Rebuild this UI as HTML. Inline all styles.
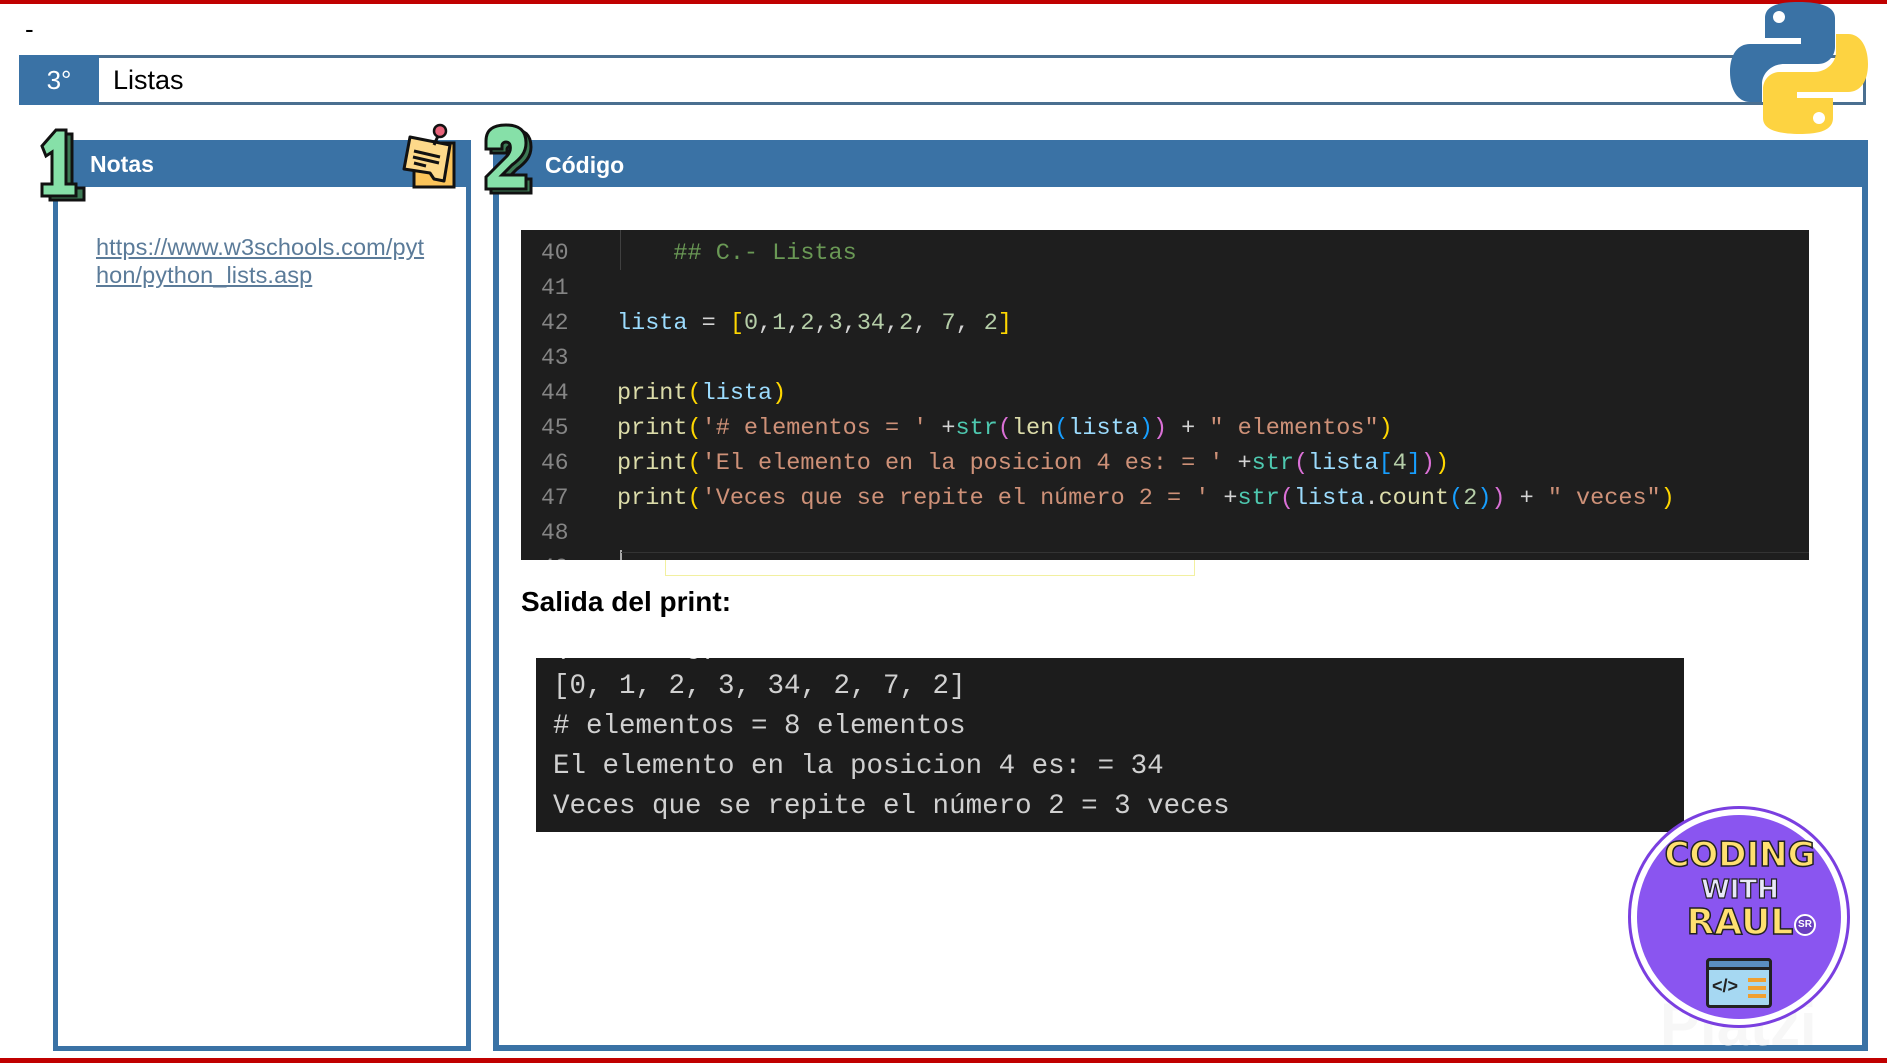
<!DOCTYPE html>
<html><head><meta charset="utf-8"><style>
*{margin:0;padding:0;box-sizing:border-box}
body{width:1887px;height:1063px;background:#fff;position:relative;overflow:hidden;font-family:"Liberation Sans",sans-serif}
.abs{position:absolute}
.blue{background:#3a72a5}
.mono{font-family:"Liberation Mono",monospace}
.code div{height:35px;line-height:35px;white-space:pre}
.ln{color:#858585}
.c{color:#6a9955}.v{color:#9cdcfe}.f{color:#dcdcaa}.s{color:#ce9178}.t{color:#4ec9b0}.n{color:#b5cea8}
.g{color:#ffd700}.p{color:#da70d6}.b{color:#179fff}.w{color:#d4d4d4}
.out div{height:40px;line-height:40px;white-space:pre;color:#d0d0d0}
</style></head><body>
<div class="abs" style="left:0;top:0;width:1887px;height:4px;background:#c00000"></div>
<div class="abs" style="left:0;top:1058px;width:1887px;height:5px;background:#c00000"></div>
<div class="abs" style="left:25px;top:14px;font-size:26px">-</div>

<div class="abs" style="left:19px;top:55px;width:1847px;height:50px;border:3px solid #4a6f90;border-left:none"></div>
<div class="abs blue" style="left:19px;top:55px;width:80px;height:50px;color:#fff;font-size:26px;line-height:50px;text-align:center">3°</div>
<div class="abs" style="left:113px;top:55px;height:50px;line-height:50px;font-size:27px;color:#000">Listas</div>

<svg class="abs" style="left:1728px;top:0" width="142" height="136" viewBox="0 0 142 136">
<path d="M70 2c-20 0-33 4-33 16v20h36v6H22C10 44 2 54 2 72s8 30 20 30h12V84c0-11 10-20 22-20h34c10 0 17-8 17-17V18C107 7 94 2 70 2z" fill="#3a72a5"/>
<circle cx="51" cy="17" r="6" fill="#fff"/>
<path d="M72 134c20 0 33-4 33-16V98H69v-6h51c12 0 20-10 20-28s-8-30-20-30h-12v18c0 11-10 20-22 20H52c-10 0-17 8-17 17v29c0 11 13 16 37 16z" fill="#fdd341"/>
<circle cx="91" cy="118" r="6" fill="#fff"/>
</svg>

<div class="abs" style="left:53px;top:140px;width:418px;height:911px;border:5px solid #3a72a5;border-top:none"></div>
<div class="abs blue" style="left:53px;top:140px;width:418px;height:47px"></div>
<div class="abs" style="left:90px;top:148px;color:#fff;font-weight:bold;font-size:23px;line-height:32px">Notas</div>
<svg class="abs" style="left:36px;top:126px" width="52" height="76" viewBox="0 0 52 76">
<path d="M10 22 L24 6 L32 6 L32 60 L44 60 L44 72 L10 72 L10 60 L20 60 L20 28 L14 32Z" fill="#3d7a55" stroke="#111" stroke-width="3" transform="translate(4,2)"/>
<path d="M6 20 L20 4 L30 4 L30 58 L40 58 L40 70 L6 70 L6 58 L16 58 L16 26 L10 30Z" fill="#86e0a8" stroke="#111" stroke-width="3"/>
</svg>
<svg class="abs" style="left:400px;top:123px" width="60" height="66" viewBox="0 0 60 66">
<rect x="14" y="20" width="40" height="44" fill="#fbc45a" stroke="#111" stroke-width="3"/>
<path d="M10 14 L50 22 L44 58 L34 56 L30 50 L4 46Z" fill="#fdd98a" stroke="#111" stroke-width="3" stroke-linejoin="round"/>
<path d="M14 28l26 6M13 34l26 6M14 40l12 3" stroke="#111" stroke-width="3"/>
<circle cx="40" cy="8" r="6" fill="#e8637a" stroke="#111" stroke-width="2.5"/>
<path d="M38 13 L34 22" stroke="#111" stroke-width="3"/>
</svg>
<div class="abs" style="left:96px;top:233px;font-size:23.5px;line-height:28px;color:#5b7b99;text-decoration:underline;letter-spacing:0.1px">https://www.w3schools.com/pyt<br>hon/python_lists.asp</div>

<div class="abs" style="left:493px;top:140px;width:1375px;height:911px;border:6px solid #3a72a5;border-top:none"></div>
<div class="abs blue" style="left:493px;top:140px;width:1375px;height:47px"></div>
<div class="abs" style="left:545px;top:149px;color:#fff;font-weight:bold;font-size:23px;line-height:32px">Código</div>
<svg class="abs" style="left:482px;top:123px" width="56" height="76" viewBox="0 0 56 76">
<g transform="translate(5,4)"><path d="M4 18 C4 6 12 2 24 2 C38 2 44 8 44 20 C44 30 38 36 30 42 L20 52 L44 52 L44 66 L4 66 L4 54 L24 34 C28 30 29 26 28 22 C27 18 21 18 20 22 L20 26 L4 26Z" fill="#3d7a55" stroke="#111" stroke-width="3"/></g>
<path d="M4 18 C4 6 12 2 24 2 C38 2 44 8 44 20 C44 30 38 36 30 42 L20 52 L44 52 L44 66 L4 66 L4 54 L24 34 C28 30 29 26 28 22 C27 18 21 18 20 22 L20 26 L4 26Z" fill="#86e0a8" stroke="#111" stroke-width="3"/>
</svg>

<div class="abs" style="left:521px;top:230px;width:1288px;height:330px;background:#1e1e1e;overflow:hidden">
<div class="abs" style="left:99px;top:0;width:1px;height:40px;background:#404040"></div>
<div class="abs code mono ln" style="left:20px;top:6px;font-size:23px">
<div>40</div><div>41</div><div>42</div><div>43</div><div>44</div><div>45</div><div>46</div><div>47</div><div>48</div><div>49</div></div>
<div class="abs code mono w" style="left:96px;top:6px;font-size:23.5px">
<div><span class="c">    ## C.- Listas</span></div>
<div> </div>
<div><span class="v">lista</span> = <span class="g">[</span><span class="n">0</span>,<span class="n">1</span>,<span class="n">2</span>,<span class="n">3</span>,<span class="n">34</span>,<span class="n">2</span>, <span class="n">7</span>, <span class="n">2</span><span class="g">]</span></div>
<div> </div>
<div><span class="f">print</span><span class="g">(</span><span class="v">lista</span><span class="g">)</span></div>
<div><span class="f">print</span><span class="g">(</span><span class="s">'# elementos = '</span> +<span class="t">str</span><span class="p">(</span><span class="f">len</span><span class="b">(</span><span class="v">lista</span><span class="b">)</span><span class="p">)</span> + <span class="s">" elementos"</span><span class="g">)</span></div>
<div><span class="f">print</span><span class="g">(</span><span class="s">'El elemento en la posicion 4 es: = '</span> +<span class="t">str</span><span class="p">(</span><span class="v">lista</span><span class="b">[</span><span class="n">4</span><span class="b">]</span><span class="p">)</span><span class="g">)</span></div>
<div><span class="f">print</span><span class="g">(</span><span class="s">'Veces que se repite el número 2 = '</span> +<span class="t">str</span><span class="p">(</span><span class="v">lista</span>.<span class="f">count</span><span class="b">(</span><span class="n">2</span><span class="b">)</span><span class="p">)</span> + <span class="s">" veces"</span><span class="g">)</span></div>
</div>
<div class="abs" style="left:99px;top:320px;width:2px;height:10px;background:#aaa"></div>
<div class="abs" style="left:100px;top:322px;width:1188px;height:1px;background:#333"></div>
</div>
<div class="abs" style="left:665px;top:560px;width:530px;height:16px;border:1px solid #f2f0a0;border-top:none"></div>

<div class="abs" style="left:521px;top:586px;font-size:28px;font-weight:bold;color:#000">Salida del print:</div>

<div class="abs" style="left:536px;top:658px;width:1148px;height:174px;background:#1c1c1c;overflow:hidden">
<div class="abs out mono" style="left:17px;top:-31px;font-size:27.5px">
<div>(  ...  g)</div>
<div>[0, 1, 2, 3, 34, 2, 7, 2]</div>
<div># elementos = 8 elementos</div>
<div>El elemento en la posicion 4 es: = 34</div>
<div>Veces que se repite el número 2 = 3 veces</div>
</div></div>

<div class="abs" style="left:1660px;top:990px;font-size:60px;font-weight:bold;color:#f7f7f7">Platzi</div>

<div class="abs" style="left:1628px;top:806px;width:222px;height:222px;border-radius:50%;background:#fff;border:3px solid #7a3fe0"></div>
<div class="abs" style="left:1637px;top:815px;width:204px;height:204px;border-radius:50%;background:#8a55f0"></div>
<div class="abs" style="left:1660px;top:838px;width:160px;text-align:center;font-family:'DejaVu Sans',sans-serif;font-weight:bold;color:#ffe070;font-size:34px;line-height:34px;-webkit-text-stroke:1.5px #222">CODING</div>
<div class="abs" style="left:1660px;top:876px;width:160px;text-align:center;font-family:'DejaVu Sans',sans-serif;font-weight:bold;color:#e8e8f8;font-size:26px;line-height:28px;-webkit-text-stroke:1.2px #222">WITH</div>
<div class="abs" style="left:1680px;top:904px;width:120px;text-align:center;font-family:'DejaVu Sans',sans-serif;font-weight:bold;color:#ffe070;font-size:36px;line-height:38px;-webkit-text-stroke:1.5px #222">RAUL</div>
<div class="abs" style="left:1794px;top:914px;width:22px;height:22px;border-radius:50%;background:#6a3fc0;border:2px solid #fff;color:#fff;font-size:10px;line-height:18px;text-align:center;font-weight:bold">SR</div>
<div class="abs" style="left:1706px;top:958px;width:66px;height:50px;border:3px solid #222;border-radius:4px;background:#a6d8f2"></div>
<div class="abs" style="left:1706px;top:958px;width:66px;height:12px;background:#5a8ec0;border:3px solid #222;border-radius:4px 4px 0 0"></div>
<div class="abs" style="left:1712px;top:976px;font-size:18px;font-weight:bold;color:#222">&lt;/&gt;</div>
<div class="abs" style="left:1748px;top:978px;width:18px;height:4px;background:#f0a030"></div>
<div class="abs" style="left:1748px;top:986px;width:18px;height:4px;background:#f0a030"></div>
<div class="abs" style="left:1748px;top:994px;width:18px;height:4px;background:#f0a030"></div>
</body></html>
